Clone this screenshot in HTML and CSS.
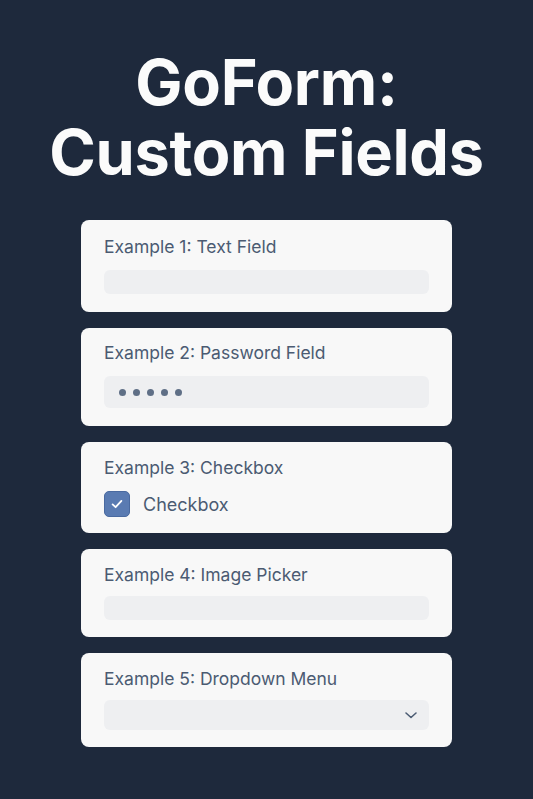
FILE: index.html
```html
<!DOCTYPE html>
<html>
<head>
<meta charset="utf-8">
<link rel="stylesheet" href="styles.css">
</head>
<body>
<main class="page">
  <h1 class="title">GoForm:<br>Custom Fields</h1>
  <section class="list">
    <div class="card card-1">
      <div class="label">Example 1: Text Field</div>
      <div class="field field-text"></div>
    </div>
    <div class="card card-2">
      <div class="label">Example 2: Password Field</div>
      <div class="field field-pass">
        <span class="dot"></span><span class="dot"></span><span class="dot"></span><span class="dot"></span><span class="dot"></span>
      </div>
    </div>
    <div class="card card-3">
      <div class="label">Example 3: Checkbox</div>
      <div class="check-row">
        <span class="box">
          <svg width="16" height="16" viewBox="0 0 16 16"><path d="M3.6 8.4 L6.6 11.2 L12.4 4.9" fill="none" stroke="#fff" stroke-width="1.8" stroke-linecap="round" stroke-linejoin="round"/></svg>
        </span>
        <span class="check-text">Checkbox</span>
      </div>
    </div>
    <div class="card card-4">
      <div class="label">Example 4: Image Picker</div>
      <div class="field field-text"></div>
    </div>
    <div class="card card-5">
      <div class="label">Example 5: Dropdown Menu</div>
      <div class="field field-select">
        <svg width="14" height="10" viewBox="0 0 14 10"><path d="M2 3 L7 7.5 L12 3" fill="none" stroke="#4d5d74" stroke-width="1.6" stroke-linecap="round" stroke-linejoin="round"/></svg>
      </div>
    </div>
  </section>
</main>
</body>
</html>
```

FILE: styles.css
```css
* { box-sizing: border-box; }
html, body { margin: 0; padding: 0; }
body {
  background: #1e293c;
  font-family: Inter, "Noto Sans", sans-serif;
  width: 533px;
  height: 799px;
  overflow: hidden;
}
.page {
  display: flex;
  flex-direction: column;
  align-items: center;
  padding-top: 47px;
}
.title {
  margin: 0;
  color: #fbfbfb;
  font-size: 63px;
  line-height: 70px;
  font-weight: 700;
  text-align: center;
  letter-spacing: -0.3px;
}
.list {
  margin-top: 33px;
  width: 371px;
  display: flex;
  flex-direction: column;
  gap: 16px;
}
.card {
  background: #f8f8f8;
  border-radius: 8px;
  padding: 15px 23px 17px;
  display: flex;
  flex-direction: column;
  gap: 10px;
}
.card-1 { padding-top: 16px; padding-bottom: 18px; gap: 12px; }
.card-2 { padding-top: 14px; padding-bottom: 18px; gap: 12px; }
.card-3 { padding-bottom: 16px; gap: 12px; }
.label {
  color: #4b5b72;
  font-size: 17.5px;
  line-height: 22px;
}
.field {
  background: #eeeff1;
  border-radius: 6px;
}
.field-text { height: 24px; }
.field-pass {
  height: 32px;
  display: flex;
  align-items: center;
  gap: 7px;
  padding-left: 15px;
}
.dot {
  width: 7px;
  height: 7px;
  border-radius: 50%;
  background: #5f6f86;
}
.field-select {
  height: 30px;
  display: flex;
  align-items: center;
  justify-content: flex-end;
  padding-right: 11px;
}
.check-row {
  display: flex;
  align-items: center;
  gap: 13px;
  height: 26px;
}
.box {
  width: 26px;
  height: 26px;
  border-radius: 5px;
  background: #5a7bb2;
  border: 1px solid #4a6aa0;
  display: flex;
  align-items: center;
  justify-content: center;
}
.check-text {
  color: #4b5b72;
  font-size: 18px;
}
```
